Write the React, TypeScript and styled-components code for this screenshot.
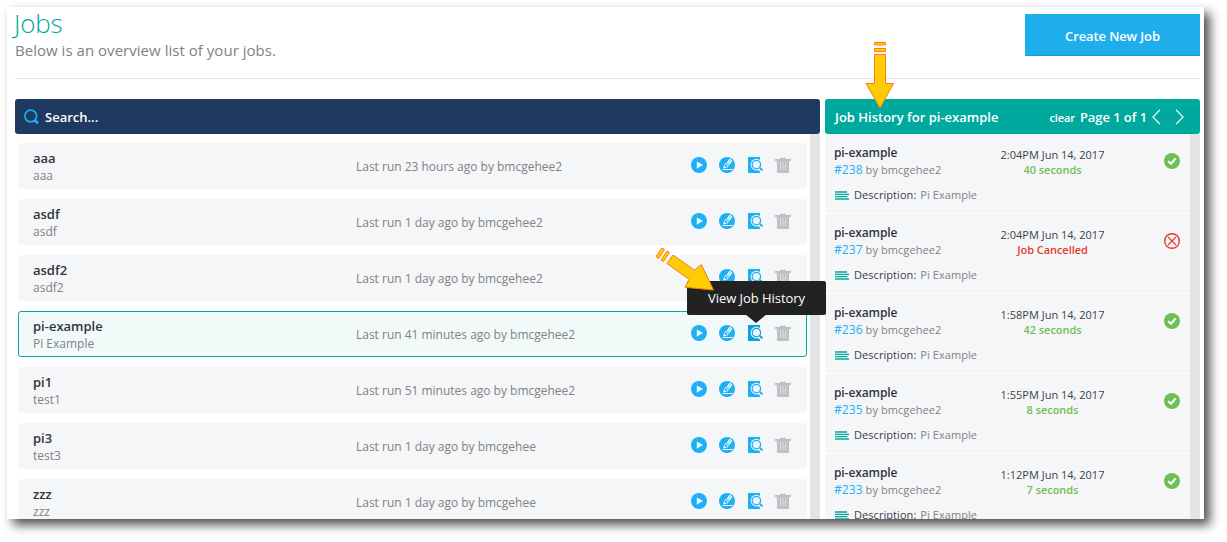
import React from "react";
import styled, { createGlobalStyle, css } from "styled-components";

const teal = "#00a99d";
const blue = "#1cb0f6";
const green = "#70bf54";
const red = "#e23b32";

const GlobalStyle = createGlobalStyle`
  * { box-sizing: border-box; }
  body { margin: 0; background: #fff; overflow: hidden; }
  body, button { font-family: "Open Sans", "Noto Sans", sans-serif; }
`;

const Stage = styled.div`
  width: 1227px;
  height: 542px;
  padding: 7px 0 0 7px;
  overflow: hidden;
`;

const Window = styled.main`
  position: relative;
  width: 1197px;
  height: 512px;
  background: #fff;
  box-shadow: 6px 6px 10px rgba(0, 0, 0, 0.68), 0 0 5px rgba(0, 0, 0, 0.04);
`;

const Clip = styled.div`
  height: 512px;
  padding: 0 4px 0 8px;
  overflow: hidden;
`;

const Header = styled.header`
  display: flex;
  justify-content: space-between;
  height: 72px;
  padding-top: 7px;
  border-bottom: 1px solid #e0e2e3;
`;

const Title = styled.h1`
  margin: -9px 0 0 -1px;
  font-size: 26px;
  line-height: 36px;
  font-weight: 300;
  letter-spacing: -0.2px;
  color: ${teal};
`;

const Subtitle = styled.p`
  margin: -1px 0 0;
  font-size: 15px;
  line-height: 20px;
  letter-spacing: 0.03px;
  color: #808285;
`;

const CreateButton = styled.button`
  width: 175px;
  height: 42px;
  padding: 2px 0 0 0;
  border: 0;
  border-bottom: 1px solid #1798d2;
  background: #1eaeec;
  color: #fff;
  font-size: 13px;
  font-weight: 600;
  letter-spacing: -0.12px;
`;

const Columns = styled.div`
  display: flex;
  gap: 5px;
  margin-top: 20px;
`;

const Panel = styled.section<{ $width: number }>`
  width: ${(p) => p.$width}px;
`;

const Bar = styled.div<{ $color: string }>`
  display: flex;
  align-items: center;
  height: 35px;
  border-radius: 3px;
  padding: 1px 15px 0 9px;
  background: ${(p) => p.$color};
  color: #fff;
  font-size: 13px;
  font-weight: 600;
  white-space: nowrap;
`;

const SearchLabel = styled.span`
  margin-left: 6px;
`;

const BarTitle = styled.span`
  flex: 1;
  padding-left: 1px;
`;

const ClearLink = styled.span`
  margin-right: 5px;
  font-size: 11px;
  letter-spacing: -0.1px;
`;

const PageLabel = styled.span`
  letter-spacing: -0.07px;
`;

const Pager = styled.span`
  display: flex;
  gap: 14px;
  margin: -1px 0 0 5px;
  padding-right: 1px;
`;

const Scroller = styled.div`
  height: 385px;
  border-right: 10px solid #e4e4e4;
  overflow: hidden;
`;

const JobList = styled.div`
  display: flex;
  flex-direction: column;
  gap: 10px;
  padding: 9px 3px 0;
`;

const JobRow = styled.div<{ $selected?: boolean }>`
  display: grid;
  grid-template-columns: 323px 1fr auto;
  flex-shrink: 0;
  height: 46px;
  padding: 6px 15px 0 14px;
  border: 1px solid #f5f6f8;
  border-radius: 3px;
  background: #f5f6f8;
  ${(p) =>
    p.$selected &&
    css`
      border-color: ${teal};
      background: #f2faf9;
    `}
`;

const JobName = styled.div`
  font-size: 13px;
  line-height: 17px;
  font-weight: 600;
  color: #303540;
`;

const JobNote = styled.div`
  font-size: 12px;
  line-height: 17px;
  color: #808285;
`;

const LastRun = styled.div`
  padding-top: 8px;
  font-size: 12px;
  line-height: 17px;
  letter-spacing: -0.01px;
  color: #808285;
`;

const Actions = styled.div`
  display: flex;
  gap: 12px;
  padding-top: 7px;
`;

const HistoryItem = styled.article`
  display: grid;
  grid-template-columns: 112px 213px 1fr;
  grid-template-rows: 50px 1fr;
  height: 80px;
  padding: 10px 0 0 9px;
  border-bottom: 1px solid #fff;
  background: #f5f6f8;
  white-space: nowrap;
`;

const HistoryName = styled.div`
  font-size: 12px;
  line-height: 17px;
  font-weight: 600;
  letter-spacing: -0.1px;
  color: #303540;
`;

const HistoryBy = styled.div`
  font-size: 11px;
  line-height: 17px;
  letter-spacing: 0.08px;
  color: #808285;
`;

const RunNumber = styled.span`
  font-size: 12px;
  color: ${blue};
`;

const When = styled.div`
  padding-top: 3px;
  text-align: center;
  font-size: 11px;
  line-height: 15px;
  color: #3d414c;
`;

const Outcome = styled.div<{ $ok: boolean }>`
  font-weight: 600;
  letter-spacing: -0.05px;
  color: ${(p) => (p.$ok ? green : red)};
`;

const Status = styled.div`
  padding: 8px 0 0 5px;
`;

const Description = styled.div`
  display: flex;
  gap: 4px;
  grid-column: 1 / -1;
  align-items: flex-start;
  font-size: 11px;
  line-height: 15px;
  letter-spacing: 0.06px;
  color: #3d414c;
  margin-top: -7px;
`;

const DescriptionIcon = styled.svg`
  margin: 4px 1px 0 1px;
`;

const DescriptionValue = styled.span`
  color: #808285;
`;

const Tooltip = styled.div`
  position: absolute;
  left: 680px;
  top: 274px;
  width: 139px;
  height: 34px;
  border-radius: 2px;
  background: #222;
  color: #fff;
  font-size: 13px;
  line-height: 34px;
  letter-spacing: -0.05px;
  text-align: center;
  &::after {
    content: "";
    position: absolute;
    left: 58px;
    top: 33px;
    border: 11px solid transparent;
    border-top: 9px solid #222;
    border-bottom: 0;
  }
`;

const Pointer = styled.svg<{ $x: number; $y: number }>`
  position: absolute;
  left: ${(p) => p.$x}px;
  top: ${(p) => p.$y}px;
`;

const SearchIcon = () => (
  <svg width="15" height="16" viewBox="0 0 15 16" fill="none" stroke={blue}>
    <circle cx="6.7" cy="7" r="5.9" strokeWidth="1.6" />
    <path d="M10.6 11 L14 14.4" strokeWidth="2.6" />
  </svg>
);

const PlayIcon = () => (
  <svg width="16" height="16" viewBox="0 0 16 16">
    <circle cx="8" cy="8" r="8" fill={blue} />
    <path d="M5.8 4.4 L12 8 L5.8 11.6Z" fill="#fff" />
  </svg>
);

const EditIcon = () => (
  <svg width="16" height="16" viewBox="0 0 16 16">
    <circle cx="8" cy="8" r="8" fill={blue} />
    <path d="M4 12.5 H13.5" stroke="#fff" strokeWidth="1" />
    <path d="M6.6 6.6 L9.4 8.7 L7.6 10.2 L4.6 11 L5.5 8.6Z" fill="none" stroke="#fff" strokeWidth="1" />
    <path d="M7.6 5.8 L10.8 1.6 L13.5 3.7 L10.3 7.9Z" fill="#fff" />
    <path d="M8.9 6.9 L12.2 2.7" stroke={blue} strokeWidth=".7" />
  </svg>
);

const HistoryIcon = ({ active }: { active?: boolean }) => {
  const color = active ? "#0d9fe6" : blue;
  const ground = active ? "#f2faf9" : "#f5f6f8";
  return (
    <svg width="16" height="16" viewBox="0 0 16 16">
      <path d="M1 0 H13 V16 H1Z" fill={color} />
      <circle cx="9.4" cy="7.6" r="5.8" fill={ground} />
      <circle cx="9.4" cy="7.6" r="4.2" fill={ground} stroke={color} strokeWidth="1.3" />
      <path d="M11.8 11.2 L14.6 13.8" stroke={ground} strokeWidth="3.4" />
      <path d="M12.3 10.5 L15.5 13.3" stroke={color} strokeWidth="1.9" />
    </svg>
  );
};

const TrashIcon = () => (
  <svg width="16" height="16" viewBox="0 0 16 16">
    <path d="M0 2 H5 V.8 H11 V2 H16 V4 H14 V16 H2 V4 H0Z" fill="#bfc0c2" />
    <path d="M5.5 5 V13 M8 5 V13 M10.5 5 V13" stroke="#d7dfed" strokeWidth="1" />
  </svg>
);

const OkIcon = () => (
  <svg width="16" height="16" viewBox="0 0 16 16">
    <circle cx="8" cy="8" r="8" fill={green} />
    <path d="M4.3 8.2 L7 10.7 L11.7 5.4" stroke="#fff" strokeWidth="2" fill="none" />
  </svg>
);

const CancelIcon = () => (
  <svg width="16" height="16" viewBox="0 0 16 16" fill="none" stroke={red}>
    <circle cx="8" cy="8" r="7.3" strokeWidth="1.4" />
    <path d="M4 4 L12 12 M12 4 L4 12" strokeWidth="1.2" />
  </svg>
);

const jobs = [
  { name: "aaa", note: "aaa", last: "Last run 23 hours ago by bmcgehee2" },
  { name: "asdf", note: "asdf", last: "Last run 1 day ago by bmcgehee2" },
  { name: "asdf2", note: "asdf2", last: "Last run 1 day ago by bmcgehee2" },
  { name: "pi-example", note: "Pi Example", last: "Last run 41 minutes ago by bmcgehee2", selected: true },
  { name: "pi1", note: "test1", last: "Last run 51 minutes ago by bmcgehee2" },
  { name: "pi3", note: "test3", last: "Last run 1 day ago by bmcgehee" },
  { name: "zzz", note: "zzz", last: "Last run 1 day ago by bmcgehee" },
];

const runs = [
  { id: "#238", when: "2:04PM Jun 14, 2017", outcome: "40 seconds", ok: true },
  { id: "#237", when: "2:04PM Jun 14, 2017", outcome: "Job Cancelled", ok: false },
  { id: "#236", when: "1:58PM Jun 14, 2017", outcome: "42 seconds", ok: true },
  { id: "#235", when: "1:55PM Jun 14, 2017", outcome: "8 seconds", ok: true },
  { id: "#233", when: "1:12PM Jun 14, 2017", outcome: "7 seconds", ok: true },
];

export default function App() {
  return (
    <Stage>
      <GlobalStyle />
      <Window>
        <Clip>
          <Header>
            <div>
              <Title>Jobs</Title>
              <Subtitle>Below is an overview list of your jobs.</Subtitle>
            </div>
            <CreateButton>Create New Job</CreateButton>
          </Header>
          <Columns>
            <Panel $width={805}>
              <Bar $color="#1f3a60">
                <SearchIcon />
                <SearchLabel>Search...</SearchLabel>
              </Bar>
              <Scroller>
                <JobList>
                  {jobs.map((job) => (
                    <JobRow key={job.name} $selected={job.selected}>
                      <div>
                        <JobName>{job.name}</JobName>
                        <JobNote>{job.note}</JobNote>
                      </div>
                      <LastRun>{job.last}</LastRun>
                      <Actions>
                        <PlayIcon />
                        <EditIcon />
                        <HistoryIcon active={job.selected} />
                        <TrashIcon />
                      </Actions>
                    </JobRow>
                  ))}
                </JobList>
              </Scroller>
            </Panel>
            <Panel $width={375}>
              <Bar $color={teal}>
                <BarTitle>Job History for pi-example</BarTitle>
                <ClearLink>clear</ClearLink>
                <PageLabel>Page 1 of 1</PageLabel>
                <Pager>
                  <svg width="9" height="16" viewBox="0 0 9 16" fill="none" stroke="#d5f1ef" strokeWidth="1.4">
                    <path d="M8 .8 L1 8 L8 15.2" />
                  </svg>
                  <svg width="9" height="16" viewBox="0 0 9 16" fill="none" stroke="#d5f1ef" strokeWidth="1.4">
                    <path d="M1 .8 L8 8 L1 15.2" />
                  </svg>
                </Pager>
              </Bar>
              <Scroller>
                {runs.map((run) => (
                  <HistoryItem key={run.id}>
                    <div>
                      <HistoryName>pi-example</HistoryName>
                      <HistoryBy>
                        <RunNumber>{run.id}</RunNumber> by bmcgehee2
                      </HistoryBy>
                    </div>
                    <When>
                      <div>{run.when}</div>
                      <Outcome $ok={run.ok}>{run.outcome}</Outcome>
                    </When>
                    <Status>{run.ok ? <OkIcon /> : <CancelIcon />}</Status>
                    <Description>
                      <DescriptionIcon width="14" height="9" viewBox="0 0 14 9">
                        <path d="M0 1 H12 M0 3.3 H14 M0 5.6 H12.5 M0 8 H14" stroke={teal} strokeWidth="1.3" />
                      </DescriptionIcon>
                      <span>Description:</span>
                      <DescriptionValue>Pi Example</DescriptionValue>
                    </Description>
                  </HistoryItem>
                ))}
              </Scroller>
            </Panel>
          </Columns>
        </Clip>
        <Tooltip>View Job History</Tooltip>
        <Pointer $x={857} $y={34} width="32" height="70" viewBox="864 41 32 70" fill="#ffcb05" stroke="#f97f14">
          <path d="M874.5 42.5 H885.5 V45 H874.5Z M874.5 48.5 H885.5 V51.5 H874.5Z M874.5 54.5 H885.5 V83.5 H893.5 L880 108 L866 83.5 H874.5Z" />
        </Pointer>
        <Pointer $x={647} $y={239} width="62" height="46" viewBox="654 246 62 46" fill="#ffcb05" stroke="#f97f14">
          <path d="M656 256.5 L662 248 L664.5 249.5 L658.5 258.5Z M661 260 L667 251 L669.5 252.5 L663.5 261.5Z M667 263.5 L673 255 L694.7 270.2 L701.3 264.5 L713.5 290 L685 287.3 L689.3 279.5Z" />
        </Pointer>
      </Window>
    </Stage>
  );
}
